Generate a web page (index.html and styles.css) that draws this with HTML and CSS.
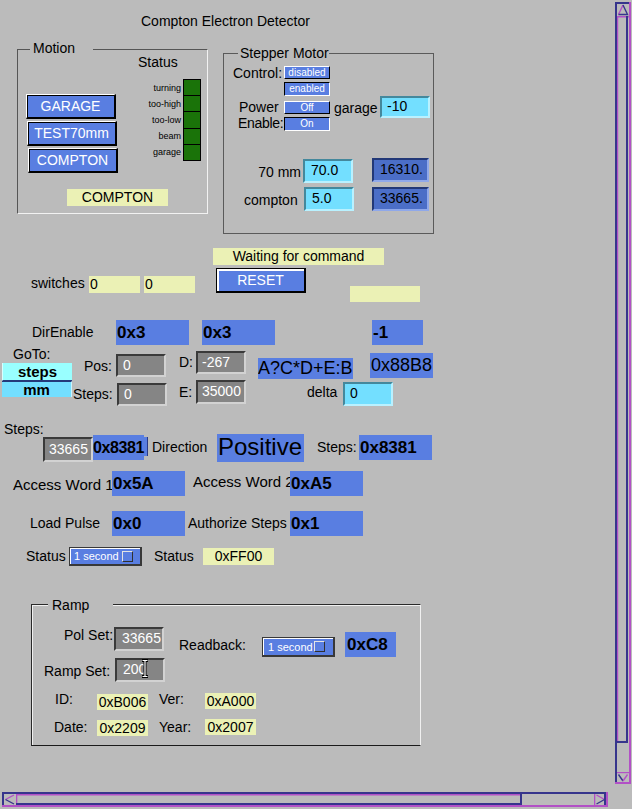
FILE: index.html
```html
<!DOCTYPE html>
<html>
<head>
<meta charset="utf-8">
<title>Compton Electron Detector</title>
<link rel="stylesheet" href="styles.css">
</head>
<body>
<div class="screen">
  <div class="t title">Compton Electron Detector</div>

  <div class="grp g-motion">
    <div class="glbl gl-motion">Motion</div>
    <div class="t mo-status">Status</div>
    <div class="ledl"><span>turning</span><span>too-high</span><span>too-low</span><span>beam</span><span>garage</span></div>
    <div class="leds"><i></i><i></i><i></i><i></i><i></i></div>
    <div class="w btn b-garage">GARAGE</div>
    <div class="w btn b-test">TEST70mm</div>
    <div class="w btn b-compton">COMPTON</div>
    <div class="w ylw y-compton">COMPTON</div>
  </div>

  <div class="grp g-step">
    <div class="glbl gl-step">Stepper Motor</div>
    <div class="t st-control">Control:</div>
    <div class="w ch ch-up c-dis">disabled</div>
    <div class="w ch ch-dn c-en">enabled</div>
    <div class="t st-power">Power</div>
    <div class="t st-enable">Enable:</div>
    <div class="w ch ch-up c-off">Off</div>
    <div class="w ch ch-dn c-on">On</div>
    <div class="t st-garage">garage</div>
    <div class="w ent ent-c e-garage">-10</div>
    <div class="t st-70">70 mm</div>
    <div class="w ent ent-c e-70">70.0</div>
    <div class="w ent ent-b e-16310">16310.</div>
    <div class="t st-compton">compton</div>
    <div class="w ent ent-c e-5">5.0</div>
    <div class="w ent ent-b e-33665b">33665.</div>
  </div>

  <div class="w ylw y-wait">Waiting for command</div>
  <div class="t t-switches">switches</div>
  <div class="w ylw y-sw1">0</div>
  <div class="w ylw y-sw2">0</div>
  <div class="w reset">RESET</div>
  <div class="w ylw y-empty"></div>

  <div class="t t-dir">DirEnable</div>
  <div class="w mon m-dir1">0x3</div>
  <div class="w mon m-dir2">0x3</div>
  <div class="w mon m-neg">-1</div>

  <div class="t t-goto">GoTo:</div>
  <div class="w gt-steps">steps</div>
  <div class="w gt-mm">mm</div>
  <div class="t t-pos">Pos:</div>
  <div class="w ent ent-g e-pos">0</div>
  <div class="t t-steps">Steps:</div>
  <div class="w ent ent-g e-steps">0</div>
  <div class="t t-d">D:</div>
  <div class="w ent ent-g e-d">-267</div>
  <div class="t t-e">E:</div>
  <div class="w ent ent-g e-e">35000</div>
  <div class="w mon big m-formula">A?C*D+E:B</div>
  <div class="w mon big m-88b8">0x88B8</div>
  <div class="t t-delta">delta</div>
  <div class="w ent ent-c e-delta">0</div>

  <div class="t t-steps2">Steps:</div>
  <div class="w ent ent-g e-33665">33665</div>
  <div class="w strip"></div>
  <div class="w mon m-8381a">0x8381</div>
  <div class="t t-direction">Direction</div>
  <div class="w mon pos m-positive">Positive</div>
  <div class="t t-steps3">Steps:</div>
  <div class="w mon m-8381b">0x8381</div>

  <div class="t t15 t-aw1">Access Word 1</div>
  <div class="w mon m-5a">0x5A</div>
  <div class="t t15 t-aw2">Access Word 2</div>
  <div class="w mon m-a5">0xA5</div>
  <div class="t t-load">Load Pulse</div>
  <div class="w mon m-0x0">0x0</div>
  <div class="t t-auth">Authorize Steps</div>
  <div class="w mon m-0x1">0x1</div>

  <div class="t t-status1">Status</div>
  <div class="w menu mn-status"><span>1 second</span><span class="sq"></span></div>
  <div class="t t-status2">Status</div>
  <div class="w ylw y-ff00">0xFF00</div>

  <div class="grp g-ramp">
    <div class="glbl gl-ramp">Ramp</div>
    <div class="t r-pol">Pol Set:</div>
    <div class="w ent ent-g e-pol">33665</div>
    <div class="t r-ramp">Ramp Set:</div>
    <div class="w ent ent-g e-ramp">200</div>
    <div class="t r-readback">Readback:</div>
    <div class="w menu mn-ramp"><span>1 second</span><span class="sq"></span></div>
    <div class="w mon m-c8">0xC8</div>
    <div class="t r-id">ID:</div>
    <div class="w ylw yc r-y1">0xB006</div>
    <div class="t r-ver">Ver:</div>
    <div class="w ylw yc r-y2">0xA000</div>
    <div class="t r-date">Date:</div>
    <div class="w ylw yc r-y3">0x2209</div>
    <div class="t r-year">Year:</div>
    <div class="w ylw yc r-y4">0x2007</div>
  </div>

  <svg class="ibeam" width="8" height="19" viewBox="0 0 8 19">
    <path d="M1 1.5h6M1 17.5h6M4 1.5v16" stroke="#000" stroke-width="3" fill="none"/>
    <path d="M1.5 1.5h5M1.5 17.5h5M4 1.5v16" stroke="#fff" stroke-width="1.2" fill="none"/>
  </svg>

  <svg class="vscroll" width="18" height="784" viewBox="0 0 18 784">
    <rect x="1" y="1" width="2" height="782" fill="#36358c"/>
    <rect x="1" y="1" width="16" height="2" fill="#36358c"/>
    <rect x="15" y="1" width="2" height="782" fill="#b250c6"/>
    <rect x="1" y="781" width="16" height="2" fill="#b250c6"/>
    <path d="M9 4 L4.5 13.5" stroke="#b250c6" stroke-width="1.4" fill="none"/>
    <path d="M9 4 L13.5 13.5 L4.5 13.5" stroke="#36358c" stroke-width="1.4" fill="none"/>
    <rect x="3" y="15" width="12" height="1.5" fill="#b250c6"/>
    <rect x="3" y="15" width="1.2" height="727" fill="#b250c6"/>
    <rect x="12" y="15" width="2" height="727" fill="#36358c"/>
    <rect x="3" y="740" width="11" height="2" fill="#36358c"/>
    <rect x="3" y="771" width="12" height="1.2" fill="#b250c6"/>
    <path d="M4.5 773.5 L9 780" stroke="#36358c" stroke-width="1.4" fill="none"/>
    <path d="M9 780 L13.5 773.5" stroke="#b250c6" stroke-width="1.4" fill="none"/>
  </svg>

  <svg class="hscroll" width="608" height="17" viewBox="0 0 608 17">
    <rect x="1" y="1" width="605" height="2" fill="#36358c"/>
    <rect x="1" y="1" width="2" height="15" fill="#36358c"/>
    <rect x="1" y="14" width="606" height="2" fill="#b250c6"/>
    <rect x="605" y="1" width="2" height="15" fill="#b250c6"/>
    <path d="M4.5 8.5 L13 4" stroke="#b250c6" stroke-width="1.4" fill="none"/>
    <path d="M4.5 8.5 L13 13" stroke="#36358c" stroke-width="1.4" fill="none"/>
    <rect x="15" y="3" width="1.3" height="11" fill="#b250c6"/>
    <rect x="15" y="3" width="506" height="1.5" fill="#b250c6"/>
    <rect x="15" y="12" width="506" height="2" fill="#36358c"/>
    <rect x="519" y="3" width="2" height="11" fill="#36358c"/>
    <rect x="593" y="3" width="1.3" height="11" fill="#b250c6"/>
    <path d="M595.5 4 L603.5 8.5" stroke="#b250c6" stroke-width="1.4" fill="none"/>
    <path d="M595.5 13 L603.5 8.5" stroke="#36358c" stroke-width="1.4" fill="none"/>
    <rect x="603" y="3" width="2" height="11" fill="#36358c"/>
  </svg>
</div>
</body>
</html>
```
FILE: styles.css
```css
html, body { margin: 0; padding: 0; background: #bbbbbb; }

.screen {
  position: relative;
  width: 632px;
  height: 809px;
  overflow: hidden;
  background: #bbbbbb;
  font-family: "Liberation Sans", Arial, sans-serif;
  color: #000;
}

/* generic pieces */
.t { position: absolute; font-size: 14px; line-height: 16px; white-space: nowrap; }
.t15 { font-size: 15px; line-height: 17px; }
.w { position: absolute; box-sizing: border-box; white-space: nowrap; overflow: hidden; }
.grp { position: absolute; box-sizing: border-box; border: 1px solid; }
.glbl {
  position: absolute; height: 16px; font-size: 14px; line-height: 16px;
  background: #bbbbbb; box-sizing: border-box; white-space: nowrap;
}

.btn {
  width: 90px; height: 25px;
  background: #597ee1; color: #fff;
  font-size: 14px; line-height: 22px; text-align: center;
  border-style: solid; border-width: 1px 2px 2px 1px;
  border-color: #fff #000 #000 #fff;
  box-shadow: inset 1px 1px 0 #000;
}
.reset {
  left: 216px; top: 268px; width: 90px; height: 25px;
  background: #597ee1; color: #fff;
  font-size: 14px; line-height: 23px; text-align: center;
  border: 1px solid #000; border-width: 1px 2px 2px 1px;
  box-shadow: inset 2px 2px 0 #fff;
}
.ylw { background: #ebf1b5; font-size: 14px; line-height: 17px; height: 17px; }
.yc { text-align: center; height: 16px; line-height: 16px; }
.mon {
  background: #597ee1; font-weight: bold; font-size: 17px;
  line-height: 25px; height: 25px; padding-left: 1px;
}
.big { font-weight: normal; font-size: 18px; }
.pos { font-weight: normal; font-size: 24px; line-height: 26px; }

.ent { border: 2px solid; font-size: 14px; }
.ent-c { background: #73dfff; border-color: #44889c #b9f1ff #b9f1ff #44889c; }
.ent-g { background: #858585; color: #fff; border-color: #3a3a3a #d2d2d2 #d2d2d2 #3a3a3a; }
.ent-b { background: #4b6ec7; color: #000; border-color: #223877 #8fa8ea #8fa8ea #223877; }

.ch {
  width: 46px; background: #597ee1; color: #fff;
  font-size: 10px; text-align: center; border: 1px solid;
}
.ch-up { border-color: #fff #000 #000 #fff; }
.ch-dn { border-color: #000 #fff #fff #000; }

.menu {
  background: #597ee1; color: #fff; font-size: 11px;
  border: 1px solid #383838; border-width: 1px 2px 2px 1px;
  box-shadow: inset 1px 1px 0 #fff;
  display: flex; align-items: center; justify-content: space-between;
  padding: 0 7px 0 4px;
}
.menu .sq {
  width: 11px; height: 11px; box-sizing: border-box;
  border: 1px solid; border-color: #e4e4e4 #303030 #303030 #e4e4e4;
}

/* title */
.title { left: 141px; top: 13px; }

/* Motion group */
.g-motion { left: 17px; top: 49px; width: 191px; height: 165px; border-color: #555 #f2f2f2 #f2f2f2 #555; }
.gl-motion { left: 12px; top: -10px; width: 63px; padding-left: 3px; }
.mo-status { left: 120px; top: 4px; }
.ledl {
  position: absolute; left: 100px; top: 29px; width: 63px;
  display: grid; grid-template-rows: repeat(5, 15px); row-gap: 1px; padding-top: 2px;
  font-size: 9px; line-height: 15px; text-align: right; white-space: nowrap;
}
.leds {
  position: absolute; left: 165px; top: 29px; width: 18px; height: 82px;
  box-sizing: border-box; background: #000; padding: 1px;
  display: grid; grid-template-rows: repeat(5, 1fr); row-gap: 1px;
}
.leds i { background: #1a7309; }
.b-garage { left: 8px; top: 44px; }
.b-test { left: 9px; top: 71px; }
.b-compton { left: 10px; top: 98px; }
.y-compton { left: 49px; top: 139px; width: 101px; text-align: center; }

/* Stepper motor group */
.g-step { left: 223px; top: 53px; width: 211px; height: 181px; border-color: #5a5a5a; }
.gl-step { left: 14px; top: -9px; padding-left: 2px; }
.st-control { left: 9px; top: 11px; }
.c-dis { left: 60px; top: 12px; height: 13px; line-height: 11px; }
.c-en { left: 60px; top: 28px; height: 14px; line-height: 12px; }
.st-power { left: 15px; top: 47px; line-height: 13px; }
.st-enable { left: 14px; top: 63px; line-height: 13px; letter-spacing: -0.3px; }
.c-off { left: 60px; top: 47px; height: 13px; line-height: 11px; }
.c-on { left: 60px; top: 63px; height: 14px; line-height: 12px; }
.st-garage { left: 110px; top: 46px; }
.e-garage { left: 156px; top: 42px; width: 50px; height: 22px; line-height: 17px; padding-left: 5px; }
.st-70 { left: 30px; top: 110px; width: 47px; text-align: right; }
.e-70 { left: 79px; top: 105px; width: 50px; height: 24px; line-height: 19px; padding-left: 6px; }
.e-16310 { left: 148px; top: 104px; width: 57px; height: 24px; line-height: 19px; padding-left: 6px; }
.st-compton { left: 20px; top: 138px; }
.e-5 { left: 80px; top: 133px; width: 50px; height: 24px; line-height: 19px; padding-left: 6px; }
.e-33665b { left: 148px; top: 133px; width: 57px; height: 24px; line-height: 19px; padding-left: 6px; }

/* middle area */
.y-wait { left: 213px; top: 248px; width: 171px; text-align: center; }
.t-switches { left: 31px; top: 275px; }
.y-sw1 { left: 89px; top: 276px; width: 51px; padding-left: 1px; }
.y-sw2 { left: 144px; top: 276px; width: 51px; padding-left: 1px; }
.y-empty { left: 350px; top: 286px; width: 70px; height: 16px; }

.t-dir { left: 32px; top: 324px; }
.m-dir1 { left: 116px; top: 320px; width: 73px; }
.m-dir2 { left: 202px; top: 320px; width: 73px; }
.m-neg { left: 372px; top: 320px; width: 51px; }

.t-goto { left: 13px; top: 346px; }
.gt-steps {
  left: 2px; top: 363px; width: 70px; height: 18px;
  background: #99ffff; border-bottom: 1px solid #24397a; border-left: 1px solid #d8ffff;
  font-weight: bold; font-size: 15px; line-height: 17px; text-align: center;
}
.gt-mm {
  left: 2px; top: 381px; width: 70px; height: 16px;
  background: #73dfff; border-top: 1px solid #24397a; border-right: 1px solid #c8f4ff;
  font-weight: bold; font-size: 15px; line-height: 15px; text-align: center;
}
.t-pos { left: 84px; top: 358px; }
.e-pos { left: 116px; top: 354px; width: 50px; height: 23px; line-height: 19px; padding-left: 5px; }
.t-steps { left: 73px; top: 386px; }
.e-steps { left: 117px; top: 383px; width: 50px; height: 23px; line-height: 19px; padding-left: 5px; }
.t-d { left: 179px; top: 354px; }
.e-d { left: 196px; top: 351px; width: 50px; height: 23px; line-height: 18px; padding-left: 4px; }
.t-e { left: 179px; top: 384px; }
.e-e { left: 196px; top: 380px; width: 50px; height: 24px; line-height: 19px; padding-left: 4px; }
.m-formula { left: 258px; top: 358px; width: 95px; height: 21px; line-height: 21px; padding-left: 0; }
.m-88b8 { left: 370px; top: 353px; width: 63px; }
.t-delta { left: 307px; top: 384px; }
.e-delta { left: 343px; top: 382px; width: 50px; height: 24px; line-height: 19px; padding-left: 5px; }

.t-steps2 { left: 4px; top: 421px; }
.e-33665 { left: 43px; top: 437px; width: 50px; height: 25px; line-height: 20px; padding-left: 4px; }
.m-8381a { left: 93px; top: 435px; width: 51px; font-size: 16px; letter-spacing: -0.4px; padding-left: 0; overflow: visible; }
.strip { left: 144px; top: 437px; width: 4px; height: 19px; background: #597ee1; border-right: 1px solid #2a3a88; }
.t-direction { left: 152px; top: 439px; }
.m-positive { left: 217px; top: 434px; width: 87px; height: 28px; line-height: 25px; padding-left: 1px; }
.t-steps3 { left: 317px; top: 439px; }
.m-8381b { left: 359px; top: 435px; width: 73px; }

.t-aw1 { left: 13px; top: 476px; }
.m-5a { left: 112px; top: 471px; width: 73px; }
.t-aw2 { left: 193px; top: 473px; }
.m-a5 { left: 290px; top: 471px; width: 73px; }
.t-load { left: 30px; top: 515px; }
.m-0x0 { left: 112px; top: 511px; width: 73px; }
.t-auth { left: 188px; top: 515px; }
.m-0x1 { left: 290px; top: 511px; width: 73px; }

.t-status1 { left: 26px; top: 548px; }
.mn-status { left: 69px; top: 547px; width: 73px; height: 19px; }
.t-status2 { left: 154px; top: 548px; }
.y-ff00 { left: 203px; top: 548px; width: 71px; text-align: center; }

/* Ramp group */
.g-ramp { left: 31px; top: 604px; width: 390px; height: 142px; border-color: #2a2a2a #f0f0f0 #1a1a1a #2a2a2a; box-shadow: inset 1px 1px 0 #f0f0f0; }
.gl-ramp { left: 16px; top: -8px; width: 65px; padding-left: 4px; }
.r-pol { left: 32px; top: 22px; }
.e-pol { left: 82px; top: 22px; width: 50px; height: 24px; line-height: 19px; padding-left: 6px; }
.r-ramp { left: 12px; top: 58px; }
.e-ramp { left: 83px; top: 53px; width: 50px; height: 24px; line-height: 19px; padding-left: 6px; }
.r-readback { left: 147px; top: 32px; }
.mn-ramp { left: 230px; top: 32px; width: 73px; height: 20px; padding-left: 5px; padding-right: 8px; }
.m-c8 { left: 313px; top: 27px; width: 51px; padding-left: 2px; }
.r-id { left: 23px; top: 86px; }
.r-y1 { left: 65px; top: 89px; width: 51px; }
.r-ver { left: 127px; top: 86px; }
.r-y2 { left: 173px; top: 88px; width: 51px; }
.r-date { left: 22px; top: 114px; }
.r-y3 { left: 65px; top: 115px; width: 51px; }
.r-year { left: 127px; top: 114px; }
.r-y4 { left: 173px; top: 114px; width: 51px; }

/* overlays */
.ibeam { position: absolute; left: 141px; top: 659px; }
.vscroll { position: absolute; left: 614px; top: 1px; }
.hscroll { position: absolute; left: 1px; top: 791px; }
```
